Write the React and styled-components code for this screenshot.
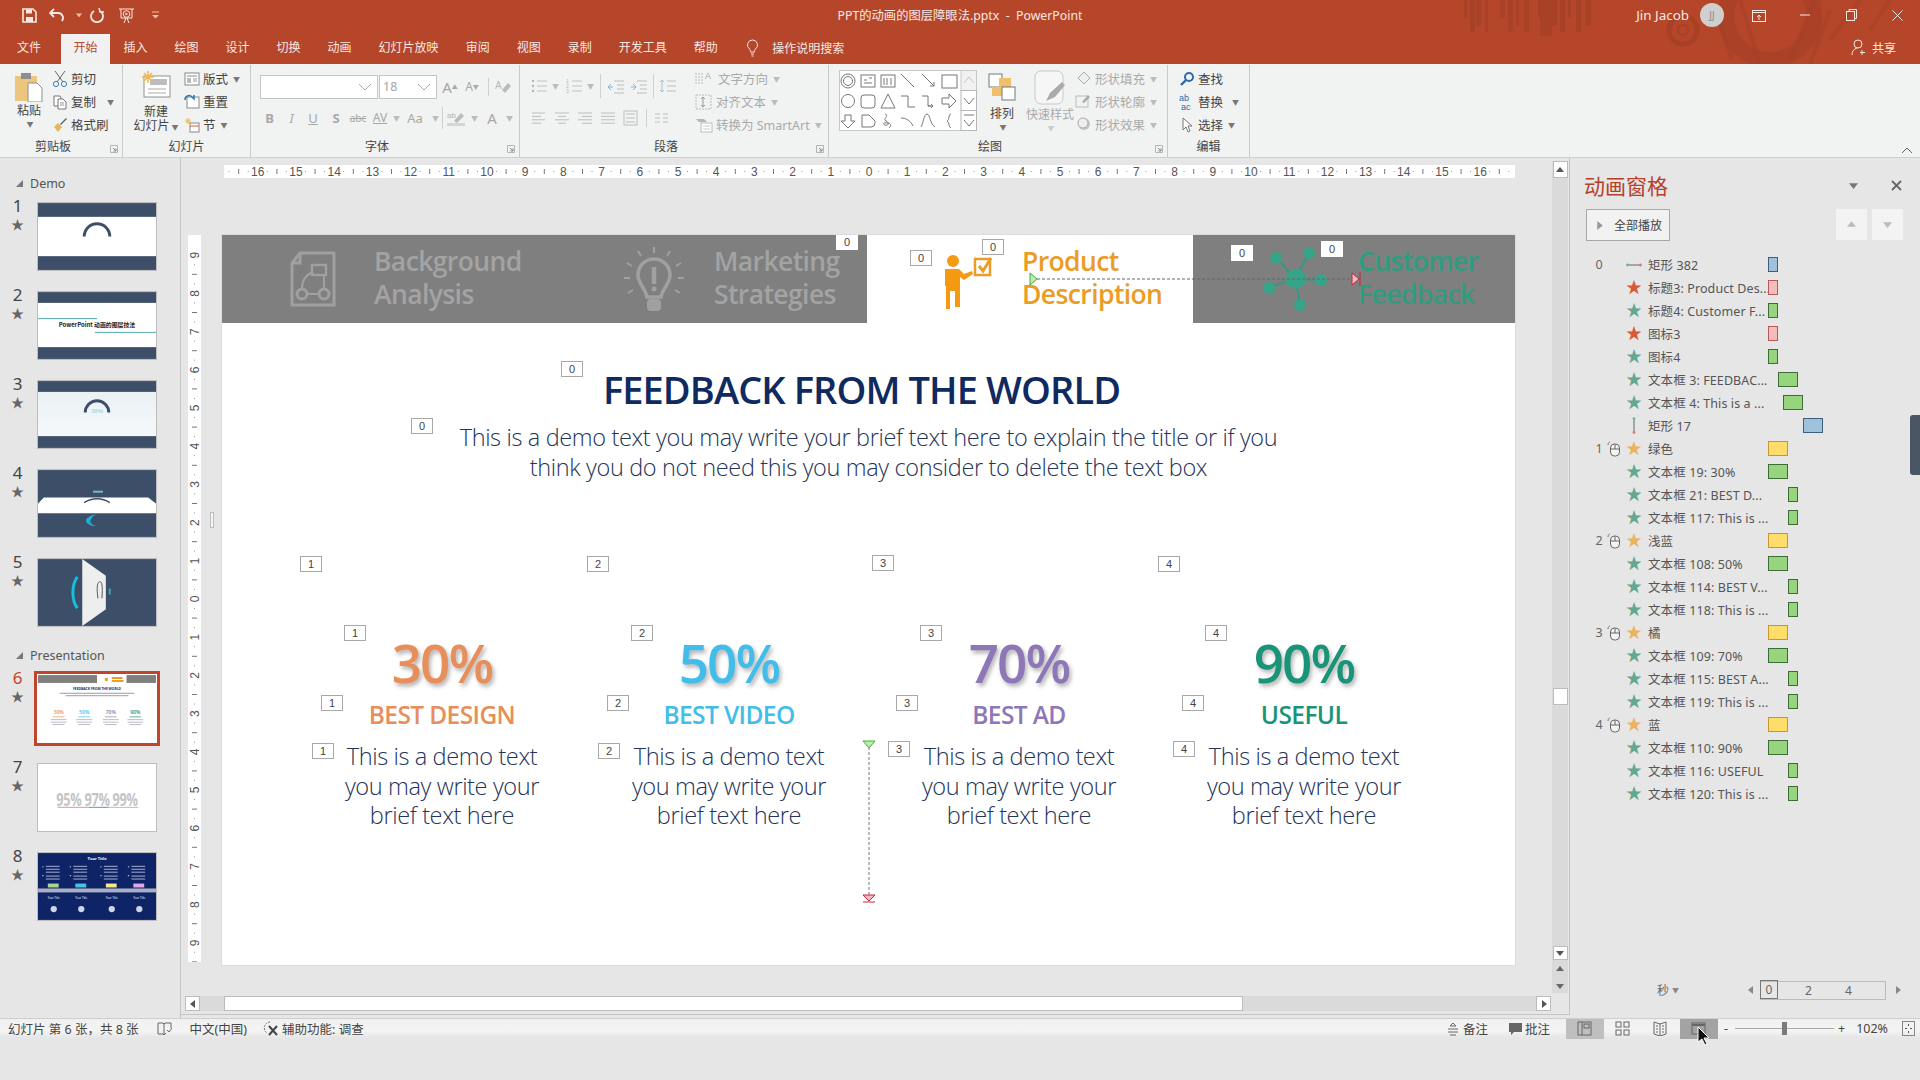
import React from 'react';
import styled, { createGlobalStyle } from 'styled-components';

const UI = `"Noto Sans", "Noto Sans CJK SC", sans-serif`;
const SLIDE = `"Open Sans", "Noto Sans", sans-serif`;

const Global = createGlobalStyle`
  html, body { margin: 0; padding: 0; width: 1920px; height: 1080px; overflow: hidden; background: #e6e6e6; }
  * { box-sizing: border-box; }
  #root { font-family: ${UI}; }
`;

const Page = styled.div`width:1920px;height:1080px;display:flex;flex-direction:column;background:#e6e6e6;color:#444;overflow:hidden;`;
const Header = styled.header`position:relative;height:64px;background:#b5462a;color:#f6e9e4;flex:none;`;
const Decor = styled.svg`position:absolute;left:1440px;top:0;width:480px;height:64px;pointer-events:none;`;
const TitleBar = styled.div`position:relative;height:30px;display:grid;grid-template-columns:1fr auto 1fr;align-items:center;`;
const Qat = styled.div`display:flex;align-items:center;padding-left:20px;height:30px;`;
const QatSlot = styled.span`display:flex;width:${p => p.$w}px;justify-content:center;`;
const DocTitle = styled.div`font-size:12.3px;white-space:pre;`;
const WinControls = styled.div`display:flex;align-items:center;justify-content:flex-end;height:30px;`;
const UserName = styled.span`font-size:13.4px;margin-right:11px;`;
const Avatar = styled.span`width:24px;height:24px;border-radius:50%;background:#cfcfcf;color:#8b8b8b;font-size:10px;display:flex;align-items:center;justify-content:center;margin-right:12px;`;
const WinBtn = styled.span`width:46px;display:flex;justify-content:center;`;
const TabRow = styled.nav`position:relative;height:34px;display:flex;align-items:flex-end;padding-left:3.5px;`;
const Tab = styled.div`height:30px;padding:0 ${p => p.$active ? 12.5 : 13.5}px;margin-right:${p => p.$mr || 0}px;font-size:12px;line-height:27px;white-space:nowrap;
  background:${p => p.$active ? '#f1f1f1' : 'transparent'};color:${p => p.$active ? '#b5462a' : '#f6e9e4'};`;
const TellMe = styled.div`display:flex;align-items:center;gap:13px;height:30px;padding-bottom:3px;font-size:12px;margin-left:15px;`;
const Share = styled.div`display:flex;align-items:center;gap:5px;height:30px;padding-bottom:3px;font-size:12px;margin-left:auto;margin-right:24px;`;

const Ribbon = styled.section`height:94px;background:#f1f2f2;border-bottom:1px solid #cfcfcf;display:flex;flex:none;position:relative;`;
const Group = styled.div`position:relative;width:${p => p.$w}px;height:92px;margin-top:1px;display:flex;flex-direction:column;
  border-right:1px solid #c9c9c9;`;
const GroupBody = styled.div`flex:1;display:flex;padding:1px 0 0 ${p => p.$pl || 0}px;gap:${p => p.$gap || 0}px;min-height:0;`;
const GroupLabel = styled.div`height:20px;font-size:12px;line-height:20px;text-align:center;padding-right:${p => p.$launch ? 16 : 0}px;color:#444;`;
const Launcher = styled.svg`position:absolute;right:4px;bottom:4px;width:8px;height:8px;`;
const Big = styled.div`display:flex;flex-direction:column;align-items:center;width:${p => p.$w}px;margin-left:${p => p.$ml || 0}px;font-size:12px;line-height:14px;color:${p => p.$off ? '#aaa' : '#444'};text-align:center;padding-top:${p => p.$pt ?? 5}px;white-space:nowrap;`;
const Stack = styled.div`display:flex;flex-direction:column;padding-top:1px;margin-left:${p => p.$ml || 0}px;`;
const Small = styled.div`height:23px;display:flex;align-items:center;gap:3px;font-size:12.5px;white-space:nowrap;color:${p => p.$off ? '#aaa' : '#444'};`;
const Caret = styled.span`font-size:7px;color:${p => p.$c || '#777'};margin-left:${p => p.$ml || 2}px;`;
const Rows = styled.div`display:flex;flex-direction:column;width:${p => p.$w ? p.$w + 'px' : 'auto'};gap:${p => p.$gap || 8}px;padding-top:${p => p.$pt || 9}px;`;
const RowLine = styled.div`display:flex;align-items:center;gap:${p => p.$gap || 0}px;height:${p => p.$h || 23}px;`;
const Combo = styled.div`width:${p => p.$w}px;height:24px;background:#fff;border:1px solid #c5c5c5;margin-left:${p => p.$ml || 0}px;display:flex;align-items:center;justify-content:space-between;padding:0 5px 0 3px;font-size:12.5px;color:#a5a5a5;`;
const Fmt = styled.span`display:flex;justify-content:center;align-items:center;flex:none;width:${p => p.$w}px;margin-left:${p => p.$ml || 0}px;font-size:${p => p.$s || 13}px;color:#a8a8a8;font-weight:${p => p.$b ? 700 : 400};font-style:${p => p.$i ? 'italic' : 'normal'};text-decoration:${p => p.$u ? 'underline' : p.$x ? 'line-through' : 'none'};`;
const FmtMark = styled.sup`font-size:6px;`;
const VSep = styled.span`width:1px;height:${p => p.$h || 20}px;background:#d0d0d0;margin:0 ${p => p.$m ?? 4}px;`;
const Spacer = styled.span`width:${p => p.$w}px;flex:none;`;
const GalleryWrap = styled.div`padding-top:4px;`;
const Collapse = styled.svg`position:absolute;right:7px;bottom:3px;width:12px;height:8px;`;

const Main = styled.main`height:860px;display:flex;flex:none;`;
const LeftPane = styled.aside`width:181px;border-right:1px solid #c4c4c4;padding-top:14px;flex:none;`;
const Section = styled.div`margin-top:${p => p.$mt || 0}px;`;
const SectionLabel = styled.div`height:22px;display:flex;align-items:center;gap:7px;padding-left:16px;font-size:12.5px;color:#555;`;
const Thumbs = styled.div`display:flex;flex-direction:column;gap:20px;padding-top:8px;`;
const ThumbRow = styled.div`display:flex;`;
const ThumbMeta = styled.div`width:37px;display:flex;flex-direction:column;align-items:center;padding-right:2px;font-size:17px;line-height:22px;margin-top:-7px;color:${p => p.$active ? '#c0452c' : '#444'};`;
const MetaStar = styled.span`font-size:13px;line-height:13px;color:#666;margin-top:1px;`;
const Thumb = styled.div`width:120px;height:69px;background:#fff;border:1px solid ${p => p.$active ? '#fff' : '#bdbdbd'};box-shadow:${p => p.$active ? '0 0 0 3px #c0452c' : 'none'};overflow:hidden;svg{display:block;width:100%;height:100%;}`;

const Center = styled.div`width:1389px;height:857px;display:flex;flex-direction:column;border-right:1px solid #c4c4c4;border-bottom:1px solid #c4c4c4;flex:none;`;
const CenterTop = styled.div`flex:1;display:flex;min-height:0;`;
const Work = styled.div`flex:1;display:flex;flex-direction:column;min-width:0;position:relative;`;
const HRuler = styled.svg`display:block;width:1291px;height:13px;margin:7px 0 0 43px;background:#fff;flex:none;`;
const Canvas = styled.div`flex:1;display:flex;align-items:flex-start;padding:57px 0 0 7px;`;
const VRuler = styled.svg`display:block;width:13px;height:727px;background:#fff;flex:none;`;
const Sash = styled.span`position:absolute;left:29px;top:354px;width:4px;height:16px;background:#f5f5f5;border:1px solid #bbb;`;
const Slide = styled.article`position:relative;margin-left:21px;width:1293px;height:730px;background:#fff;overflow:hidden;flex:none;box-shadow:0 0 0 1px #dcdcdc;`;
const Bar = styled.div`display:flex;height:88px;`;
const BarSeg = styled.div`display:flex;width:${p => p.$w}px;background:${p => p.$bg};`;
const BarItem = styled.div`display:flex;align-items:center;flex:none;width:${p => p.$w}px;padding-left:${p => p.$pl}px;gap:${p => p.$gap}px;`;
const BarLabel = styled.div`font-family:${SLIDE};font-weight:600;font-size:26.5px;line-height:33px;letter-spacing:-.6px;margin-top:-2px;color:${p => p.$c};white-space:nowrap;`;
const SlideTitle = styled.h1`margin:41px 14px 0 0;text-align:center;font-family:${SLIDE};font-weight:600;font-size:38px;line-height:50px;letter-spacing:-.9px;color:#0f2a5f;`;
const SlideLead = styled.p`margin:9px 0 0;text-align:center;font-family:${SLIDE};font-weight:300;font-size:23.5px;line-height:29.5px;letter-spacing:-.35px;color:#24345a;`;
const Cols = styled.div`display:grid;grid-template-columns:287px 287px 293px 277px;margin:149px 0 0 76.5px;`;
const Col = styled.div`display:flex;flex-direction:column;align-items:center;text-align:center;`;
const Pct = styled.div`font-family:${SLIDE};font-weight:600;font-size:53px;line-height:64px;letter-spacing:-2px;color:${p => p.$c};text-shadow:2px 3px 4px rgba(0,0,0,.3);`;
const ColHead = styled.div`margin-top:3px;font-family:${SLIDE};font-weight:600;font-size:24.5px;line-height:34px;letter-spacing:-.6px;color:${p => p.$c};`;
const ColText = styled.p`margin:10px 0 0;font-family:${SLIDE};font-weight:300;font-size:23.6px;line-height:29.5px;letter-spacing:-.4px;color:#24345a;`;
const Tag = styled.span`position:absolute;left:${p => p.$x}px;top:${p => p.$y}px;width:22px;height:16px;display:flex;align-items:center;justify-content:center;background:#fff;border:1px solid ${p => p.$bare ? '#fff' : '#a8a8a8'};font-size:11px;line-height:14px;color:#444;font-family:"Liberation Sans",sans-serif;`;
const SlideOverlay = styled.svg`position:absolute;left:0;top:0;width:1293px;height:730px;pointer-events:none;`;
const VScroll = styled.div`width:16px;margin:3px 1px 3px 0;display:flex;flex-direction:column;align-items:center;background:#dadada;flex:none;`;
const VThumb = styled.div`width:15px;height:17px;background:#fff;border:1px solid #bbb;margin-top:${p => p.$mt}px;flex:none;`;
const ScrollBtn = styled.div`width:15px;height:${p => p.$h || 15}px;background:${p => p.$flat ? 'transparent' : '#fff'};border:1px solid ${p => p.$flat ? 'transparent' : '#bbb'};display:flex;align-items:center;justify-content:center;margin-top:${p => p.$mt || 0}px;flex:none;`;
const HScroll = styled.div`height:15px;margin:0 18px 3px 4px;display:flex;align-items:stretch;background:#dadada;flex:none;`;
const HThumb = styled.div`width:1019px;background:#fff;border:1px solid #bbb;margin-left:24px;`;
const HEnd = styled.div`margin-left:auto;display:flex;`;

const AnimPane = styled.aside`flex:1;display:flex;flex-direction:column;padding:0 0 18px 14px;position:relative;`;
const PaneHead = styled.div`display:flex;align-items:center;height:51px;padding-top:3px;font-size:21px;color:#b5402a;`;
const PaneIcons = styled.div`margin-left:auto;display:flex;align-items:center;gap:33px;padding-right:18px;`;
const PaneTools = styled.div`display:flex;align-items:flex-start;padding-left:2px;height:44px;`;
const PlayAll = styled.div`width:84px;height:32px;background:#f2f2f2;border:1px solid #a8a8a8;display:flex;align-items:center;padding-left:8px;gap:10px;font-size:12px;color:#444;`;
const Order = styled.div`margin-left:auto;margin-right:17px;display:flex;gap:5px;`;
const OrderBtn = styled.div`width:31px;height:31px;background:#f3f3f3;display:flex;align-items:center;justify-content:center;`;
const AnimList = styled.div`display:flex;flex-direction:column;`;
const AnimRow = styled.div`height:23px;display:grid;grid-template-columns:16px 14px 26px 121px 1fr;align-items:center;padding-left:7px;font-size:12.5px;color:#555;`;
const AnimNum = styled.span`text-align:center;color:#666;font-size:12.5px;`;
const AnimIcon = styled.span`display:flex;justify-content:center;align-items:center;font-size:16px;line-height:15px;color:${p => p.$c || '#666'};`;
const AnimText = styled.span`padding-left:1px;white-space:nowrap;letter-spacing:.1px;`;
const AnimBar = styled.span`display:block;height:15px;width:${p => p.$w}px;margin-left:${p => p.$at}px;background:${p => p.$bg};border:1px solid ${p => p.$bd};`;
const Timeline = styled.div`margin-top:auto;display:flex;align-items:center;height:20px;padding-left:73px;font-size:12px;color:#666;`;
const TimeBox = styled.div`width:126px;height:19px;display:flex;align-items:center;border:1px solid #bbb;margin:0 8px 0 5px;position:relative;`;
const TimeZero = styled.span`width:18px;height:19px;margin:-1px 0 0 -1px;border:1px solid #777;display:flex;align-items:center;justify-content:center;`;
const TimeMark = styled.span`margin-left:${p => p.$ml}px;`;
const Overscroll = styled.span`position:absolute;right:0;top:257px;width:10px;height:60px;background:#4a5663;border-radius:3px 0 0 3px;`;

const Status = styled.footer`height:20px;flex:none;border-top:1px solid #cfcfcf;background:linear-gradient(#f0f0f0,#f4f4f4 60%,#e6e6e6);display:flex;align-items:center;font-size:12.5px;color:#444;position:relative;`;
const StatusText = styled.span`margin-left:${p => p.$ml || 0}px;margin-right:${p => p.$mr || 0}px;white-space:pre;display:flex;align-items:center;gap:${p => p.$gap || 0}px;`;
const StatusPush = styled(StatusText)`margin-left:auto;`;
const ViewBtn = styled.span`width:38px;height:20px;display:flex;align-items:center;justify-content:center;background:${p => p.$bg || 'transparent'};margin-left:${p => p.$ml || 0}px;`;
const Zoom = styled.div`width:99px;height:1px;background:#aaa;position:relative;margin:0 4px 0 7px;`;
const ZoomKnob = styled.span`position:absolute;left:47px;top:-6px;width:5px;height:13px;background:#7a7a7a;`;
const Pointer = styled.svg`position:absolute;left:1697px;top:7px;width:14px;height:20px;`;

const Ic = ({ w = 16, h = 16, vb, children, ...r }) => (
  <svg width={w} height={h} viewBox={vb || `0 0 ${w} ${h}`} fill="none" {...r}>{children}</svg>
);

const Decoration = () => (
  <Decor viewBox="0 0 480 64">
    <g fill="#a13e25" opacity=".6">
      {[24, 30, 36, 45, 60, 68, 76, 84, 98, 104, 112, 120, 128, 136, 146].map((x, i) => (
        <rect key={x} x={x} y="0" width={i % 3 === 0 ? 3 : 5} height={i % 2 ? 32 : 18 + (i % 4) * 4} />
      ))}
      <rect x="100" y="0" width="12" height="36" />
    </g>
    <g fill="none" stroke="#a13e25">
      <circle cx="243" cy="30" r="14" strokeWidth="5" opacity=".7" />
      <circle cx="243" cy="30" r="5" strokeWidth="2" opacity=".7" />
      <circle cx="330" cy="16" r="44" strokeWidth="16" opacity=".5" />
      <path d="M272 0l20 60M300 0l20 64M375 0l-25 60M390 10l-20 54M420 0l-30 40M450 0l-20 30" strokeWidth="4" opacity=".4" />
    </g>
  </Decor>
);

const Launch = () => (
  <Launcher viewBox="0 0 8 8"><path d="M.5 7.5v-7h7v7z" stroke="#b5b5b5" fill="none" /><path d="M3 3l3 3M6 3.5V6H3.5" stroke="#888" fill="none" /></Launcher>
);

const Bullets = ({ n }) => (
  <Ic w={18} h={15}>
    {[2, 7, 12].map(y => (<g key={y}>
      {n ? <text x="0" y={y + 2} fontSize="5" fill="#b5b5b5" fontFamily="Liberation Sans">{(y + 3) / 5}</text> : <circle cx="2" cy={y} r="1.2" fill="#b5b5b5" />}
      <path d={`M6 ${y}h10`} stroke="#c2c2c2" />
    </g>))}
  </Ic>
);
const AlignIc = ({ mode }) => {
  const l = mode === 0 ? [[1, 14], [1, 10], [1, 14], [1, 10]] : mode === 1 ? [[1, 15], [4, 12], [1, 15], [4, 12]] : mode === 2 ? [[1, 15], [5, 15], [1, 15], [5, 15]] : [[1, 15], [1, 15], [1, 15], [1, 15]];
  return <Ic w={16} h={14}>{l.map(([a, b], i) => <path key={i} d={`M${a} ${2 + i * 3.4}H${b}`} stroke="#bdbdbd" />)}</Ic>;
};

const Gallery = () => (
  <Ic w={138} h={61}>
    <rect x=".5" y=".5" width="137" height="60" fill="#fff" stroke="#c8c8c8" />
    <rect x="122" y=".5" width="15.5" height="20" fill="#f1f1f1" stroke="#c8c8c8" />
    <rect x="122" y="20.5" width="15.5" height="20" fill="#fff" stroke="#b5b5b5" />
    <rect x="122" y="40.5" width="15.5" height="20" fill="#fff" stroke="#b5b5b5" />
    <path d="M125 13l5-6 5 6" stroke="#c5c5c5" /><path d="M125 28l5 6 5-6" stroke="#777" /><path d="M125 45h10M125 50l5 6 5-6" stroke="#777" />
    <g stroke="#777" fill="none">
      <circle cx="9" cy="11" r="7" /><circle cx="9" cy="11" r="4.5" />
      <rect x="22" y="5" width="14" height="12" /><path d="M25 10h3M25 13h8M30 8h3" />
      <rect x="42" y="5" width="14" height="12" /><path d="M45 8v7M48 8v7M52 8v7" />
      <path d="M62 4l13 13M83 4l12 12M95 16v-4M95 16h-4" />
      <rect x="103" y="5" width="15" height="13" />
      <circle cx="9" cy="31" r="6.5" />
      <rect x="22" y="25" width="14" height="13" rx="3" />
      <path d="M49 24l7 14H42z" />
      <path d="M62 26h7v11h7M83 26h6v10h3M89 36h5l-2-2M92 38l2-2" />
      <path d="M103 28h7v-4l7 7-7 7v-4h-7z" />
      <path d="M6 45v6H2l7 7 7-7h-4v-6z" />
      <path d="M23 57V45h7l6 6v2a4 4 0 01-4 4z" />
      <path d="M46 44c5 2-3 5 1 7s2 5-1 4-1-3 3-2 3 3 1 5" />
      <path d="M62 48c5 0 10 3 12 8M82 57c2-3 3-13 6-13s3 10 8 13" />
      <path d="M112 44c-3 0-1 6-4 7 3 1 1 6 4 7" />
    </g>
  </Ic>
);

const RibbonBar = () => (
  <Ribbon>
    <Group $w={123}>
      <GroupBody $pl={13}>
        <Big $w={32}>
          <Ic w={30} h={31} style={{ marginBottom: 2 }}>
            <rect x="1" y="5" width="22" height="25" fill="#edc67d" />
            <rect x="7" y="2" width="10" height="6" fill="#8f8f8f" />
            <path d="M14 12h9l5 5v14H14z" fill="#fff" stroke="#8f8f8f" />
          </Ic>
          粘贴
          <Caret>▼</Caret>
        </Big>
        <Stack $ml={7}>
          <Small><Ic w={16} h={18}><path d="M3 1l8 11M13 1L5 12" stroke="#666" /><circle cx="4" cy="14" r="2.6" stroke="#3d7fb8" /><circle cx="12" cy="14" r="2.6" stroke="#3d7fb8" /></Ic>剪切</Small>
          <Small><Ic w={16} h={16}><path d="M2 2h6l1 2v8H2z" stroke="#777" fill="#fff" /><path d="M6 5h5l3 3v7H6z" stroke="#777" fill="#fff" /><path d="M8 9h4M8 11h4" stroke="#999" /></Ic>复制<Caret $ml={8}>▼</Caret></Small>
          <Small><Ic w={16} h={16}><path d="M8 7l6-6 1 1-6 6z" fill="#666" /><path d="M2 10l4-4 4 4-4 5z" fill="#e5b55d" /></Ic>格式刷</Small>
        </Stack>
      </GroupBody>
      <GroupLabel $launch>剪贴板</GroupLabel>
      <Launch />
    </Group>
    <Group $w={128}>
      <GroupBody $pl={10}>
        <Big $w={46} $pt={4}>
          <Ic w={30} h={29} style={{ marginBottom: 6 }}>
            <rect x="3" y="6" width="26" height="21" fill="#fff" stroke="#8f8f8f" />
            <rect x="9" y="9" width="17" height="6" fill="#bdbdbd" /><path d="M7 19h18M7 23h18" stroke="#aaa" />
            <path d="M7 1v12M1 7h12M3 3l8 8M11 3l-8 8" stroke="#f1b94f" strokeWidth="1.5" />
          </Ic>
          新建
          <span>幻灯片<Caret>▼</Caret></span>
        </Big>
        <Stack $ml={5}>
          <Small><Ic w={16} h={16}><rect x="1" y="2" width="14" height="12" fill="#fff" stroke="#888" /><path d="M3 5h10" stroke="#888" /><rect x="3" y="7" width="4" height="5" fill="#bbb" /><path d="M9 8h4M9 10h4" stroke="#999" /></Ic>版式<Caret>▼</Caret></Small>
          <Small><Ic w={16} h={16}><rect x="3" y="3" width="12" height="11" fill="#fff" stroke="#888" /><path d="M1 6a4 4 0 017-3l2 2V1" stroke="#2b7ab9" strokeWidth="1.5" /></Ic>重置</Small>
          <Small><Ic w={16} h={16}><path d="M4 1v6M1 4h6M2 2l4 4M6 2L2 6" stroke="#f1b94f" /><rect x="6" y="6" width="9" height="9" fill="#fff" stroke="#888" /><path d="M6 9h9" stroke="#d2603b" /></Ic>节<Caret>▼</Caret></Small>
        </Stack>
      </GroupBody>
      <GroupLabel>幻灯片</GroupLabel>
    </Group>
    <Group $w={269}>
      <GroupBody $pl={9}>
        <Rows $pt={9} $gap={8}>
          <RowLine>
            <Combo $w={118}><span />
              <Ic w={14} h={8}><path d="M1 1l6 6 6-6" stroke="#aaa" /></Ic></Combo>
            <Combo $w={58} $ml={1}>18<Ic w={14} h={8}><path d="M1 1l6 6 6-6" stroke="#aaa" /></Ic></Combo>
            <Fmt $w={22} $s={15} $ml={2}>A<FmtMark>▲</FmtMark></Fmt>
            <Fmt $w={22} $s={12}>A<FmtMark>▼</FmtMark></Fmt>
            <VSep $h={18} $m={5} />
            <Ic w={18} h={17}><text x="1" y="11" fontSize="10" fill="#b5b5b5" fontFamily="Liberation Sans">A</text><path d="M8 12l6-7 3 3-6 7z" fill="#bbb" /></Ic>
          </RowLine>
          <RowLine>
            <Fmt $w={23} $b $ml={-2}>B</Fmt>
            <Fmt $w={21} $i>I</Fmt>
            <Fmt $w={22} $u>U</Fmt>
            <Fmt $w={24} $b>S</Fmt>
            <Fmt $w={20} $s={10} $x>abc</Fmt>
            <Fmt $w={24} $s={12} $u>AV</Fmt><Caret $c="#bbb" $ml={1}>▼</Caret>
            <Fmt $w={30}>Aa</Fmt><Caret $c="#bbb">▼</Caret>
            <VSep $h={22} $m={3} />
            <Ic w={22} h={18}><text x="1" y="9" fontSize="8" fill="#b5b5b5" fontFamily="Liberation Sans">ab</text><path d="M8 12l7-8 3 3-7 7z" fill="#bbb" /><rect x="1" y="14" width="18" height="3" fill="#d5d5d5" /></Ic>
            <Caret $c="#bbb" $ml={3}>▼</Caret>
            <Fmt $w={22} $s={15} $ml={3}>A</Fmt><Caret $c="#bbb" $ml={3}>▼</Caret>
          </RowLine>
        </Rows>
      </GroupBody>
      <GroupLabel $launch>字体</GroupLabel>
      <Launch />
    </Group>
    <Group $w={309}>
      <GroupBody $pl={11}>
        <Rows $pt={7} $gap={8} $w={164}>
          <RowLine $h={26}>
            <Bullets /><Caret $c="#bbb" $ml={3}>▼</Caret>
            <Spacer $w={7} /><Bullets n /><Caret $c="#bbb" $ml={3}>▼</Caret>
            <VSep $h={24} $m={6} />
            <Ic w={18} h={15}><path d="M7 2h10M10 6h7M10 10h7M7 14h10" stroke="#bdbdbd" /><path d="M6 8H1l3-3M1 8l3 3" stroke="#8ab0d0" /></Ic>
            <Spacer $w={5} />
            <Ic w={18} h={15}><path d="M7 2h10M10 6h7M10 10h7M7 14h10" stroke="#bdbdbd" /><path d="M1 8h5L3 5M6 8l-3 3" stroke="#8ab0d0" /></Ic>
            <VSep $h={24} $m={5} />
            <Ic w={18} h={17}><path d="M3 2v12M1 4l2-2 2 2M1 12l2 2 2-2" stroke="#a9bfd3" /><path d="M8 3h9M8 8h9M8 13h9" stroke="#bdbdbd" /></Ic>
          </RowLine>
          <RowLine $gap={7} $h={22}>
            <AlignIc mode={0} /><AlignIc mode={1} /><AlignIc mode={2} /><AlignIc mode={3} />
            <Ic w={16} h={16}><rect x="1" y="1" width="13" height="14" stroke="#bdbdbd" /><path d="M3 4h9M3 8h9M3 12h9" stroke="#bdbdbd" /></Ic>
            <VSep $h={18} $m={0} />
            <Ic w={16} h={14}><path d="M1 3h5M1 7h5M1 11h5M9 3h5M9 7h5M9 11h5" stroke="#bdbdbd" /></Ic>
          </RowLine>
        </Rows>
        <Stack>
          <Small $off><Ic w={20} h={17}><path d="M1 3v11M4 3v11M7 3v11" stroke="#bbb" strokeDasharray="2 1" /><text x="10" y="9" fontSize="9" fill="#aaa" fontFamily="Liberation Sans">A</text></Ic>文字方向<Caret $c="#bbb">▼</Caret></Small>
          <Small $off><Ic w={18} h={17}><rect x="1" y="2" width="15" height="14" stroke="#bbb" strokeDasharray="2 1" /><path d="M8 5v8M6 6l2-2 2 2M6 12l2 2 2-2" stroke="#999" /></Ic>对齐文本<Caret $c="#bbb">▼</Caret></Small>
          <Small $off><Ic w={18} h={17}><path d="M1 3h8l3 3H4z" fill="#a5c2a8" /><rect x="6" y="7" width="11" height="9" fill="#fff" stroke="#bbb" /><path d="M8 10h7M8 13h7" stroke="#ccc" /></Ic>转换为 SmartArt<Caret $c="#bbb">▼</Caret></Small>
        </Stack>
      </GroupBody>
      <GroupLabel $launch>段落</GroupLabel>
      <Launch />
    </Group>
    <Group $w={339}>
      <GroupBody $pl={10}>
        <GalleryWrap><Gallery /></GalleryWrap>
        <Big $w={46} $pt={6} $ml={2}>
          <Ic w={30} h={32} style={{ marginBottom: 3 }}>
            <rect x="2" y="2" width="13" height="13" fill="#fff" stroke="#777" />
            <rect x="12" y="6" width="12" height="12" fill="#efbf6b" />
            <rect x="5" y="15" width="10" height="9" fill="#efbf6b" />
            <rect x="15" y="15" width="13" height="13" fill="#fff" stroke="#777" />
          </Ic>
          排列
          <Caret>▼</Caret>
        </Big>
        <Big $w={52} $off $pt={4} $ml={-1}>
          <Ic w={32} h={35} style={{ marginBottom: 3 }}>
            <rect x="1" y="1" width="28" height="33" rx="6" stroke="#c8c8c8" fill="#f6f6f6" />
            <path d="M12 31l4-8 12-11 3 3-10 12z" fill="#aaa" />
          </Ic>
          快速样式
          <Caret $c="#ccc">▼</Caret>
        </Big>
        <Stack $ml={-1}>
          <Small $off><Ic w={17} h={17}><path d="M3 8l6-6 6 6-6 6z" stroke="#aaa" fill="#eee" /></Ic>形状填充<Caret $c="#bbb">▼</Caret></Small>
          <Small $off><Ic w={17} h={17}><rect x="1" y="3" width="12" height="11" stroke="#bbb" /><path d="M7 9l6-7 2 2-6 6z" fill="#aaa" /></Ic>形状轮廓<Caret $c="#bbb">▼</Caret></Small>
          <Small $off><Ic w={17} h={17}><circle cx="9" cy="8" r="6" fill="#c5c5c5" /><circle cx="8" cy="7" r="5" fill="#eee" stroke="#aaa" /></Ic>形状效果<Caret $c="#bbb">▼</Caret></Small>
        </Stack>
      </GroupBody>
      <GroupLabel $launch>绘图</GroupLabel>
      <Launch />
    </Group>
    <Group $w={82}>
      <GroupBody $pl={11}>
        <Stack>
          <Small><Ic w={16} h={16}><circle cx="10" cy="6" r="4" stroke="#2d6aa8" strokeWidth="2" /><path d="M7 9l-5 5" stroke="#2d6aa8" strokeWidth="2.4" /></Ic>查找</Small>
          <Small><Ic w={16} h={18}><text x="0" y="8" fontSize="9" fill="#2d6aa8" fontFamily="Liberation Sans">ab</text><text x="2" y="17" fontSize="9" fill="#2d6aa8" fontFamily="Liberation Sans">ac</text></Ic>替换<Caret $ml={6}>▼</Caret></Small>
          <Small><Ic w={16} h={18}><path d="M4 2v12l3-3 2 5 2-1-2-5h4z" stroke="#777" fill="#fff" /></Ic>选择<Caret>▼</Caret></Small>
        </Stack>
      </GroupBody>
      <GroupLabel>编辑</GroupLabel>
    </Group>
    <Collapse viewBox="0 0 12 8"><path d="M1 7l5-5 5 5" stroke="#666" fill="none" /></Collapse>
  </Ribbon>
);

const range = (a, b) => Array.from({ length: b - a + 1 }, (_, i) => a + i);

const HRulerArt = () => (
  <HRuler viewBox="0 0 1291 13">
    {range(-17, 17).map(n => {
      const x = 645 + n * 38.2;
      return (
        <g key={n}>
          {Math.abs(n) <= 16 && <text x={x} y="11" textAnchor="middle" fontSize="12" fill="#555" fontFamily="Liberation Sans">{Math.abs(n)}</text>}
          <path d={`M${x + 19.1} 4v5`} stroke="#777" />
          <path d={`M${x + 9.5} 6v1M${x + 28.6} 6v1`} stroke="#999" />
        </g>
      );
    })}
  </HRuler>
);
const VRulerArt = () => (
  <VRuler viewBox="0 0 13 727">
    {range(-9, 9).map(n => {
      const y = 364 + n * 38.2;
      return (
        <g key={n}>
          <text x="0" y="0" transform={`translate(11 ${y}) rotate(-90)`} textAnchor="middle" fontSize="12" fill="#555" fontFamily="Liberation Sans">{Math.abs(n)}</text>
          <path d={`M4 ${y + 19.1}h5`} stroke="#777" />
          <path d={`M6 ${y + 9.5}h1M6 ${y + 28.6}h1`} stroke="#999" />
        </g>
      );
    })}
  </VRuler>
);

const NAVY = '#3d4f68';
const Arc = ({ cy = 34, r = 13, c = NAVY, w = 3 }) => <path d={`M${60 - r} ${cy}a${r} ${r} 0 01${r * 2} 0`} stroke={c} strokeWidth={w} fill="none" />;
const ThumbArt = ({ n }) => {
  if (n === 1) return <svg viewBox="0 0 120 68"><rect width="120" height="68" fill="#fff" /><rect width="120" height="14" fill={NAVY} /><rect y="54" width="120" height="14" fill={NAVY} /><Arc /></svg>;
  if (n === 2) return <svg viewBox="0 0 120 68"><rect width="120" height="68" fill="#fff" /><rect width="120" height="11" fill={NAVY} /><rect y="56" width="120" height="12" fill={NAVY} /><path d="M0 27h60M58 41h62" stroke="#4fa7ad" /><text x="60" y="36" textAnchor="middle" fontSize="6" fontWeight="700" fill="#222" fontFamily="Noto Sans CJK SC">PowerPoint 动画的图层技法</text></svg>;
  if (n === 3) return <svg viewBox="0 0 120 68"><defs><linearGradient id="t3" x1="0" y1="0" x2="0" y2="1"><stop offset="0" stopColor="#e7f0f4" /><stop offset="1" stopColor="#f8fafb" /></linearGradient></defs><rect width="120" height="68" fill="url(#t3)" /><rect width="120" height="11" fill={NAVY} /><rect y="56" width="120" height="12" fill={NAVY} /><Arc cy={32} r={12} /><text x="60" y="32" textAnchor="middle" fontSize="6" fill="#9fe0ea" fontWeight="700" fontFamily="Open Sans">30%</text></svg>;
  if (n === 4) return <svg viewBox="0 0 120 68"><rect width="120" height="68" fill={NAVY} /><path d="M0 34l6-6h106l8 6v10H0z" fill="#fff" /><path d="M47 33c8-5 18-5 26 0" stroke={NAVY} strokeWidth="1.5" fill="none" /><path d="M56 22h10" stroke="#6fc0c8" strokeWidth="2" /><path d="M59 45c-9 2-12 6-9 9 2 2 6 3 9 3-5-2-7-4-5-7 1-2 3-4 5-5z" fill="#1ab0d8" /></svg>;
  if (n === 5) return <svg viewBox="0 0 120 68"><rect width="120" height="68" fill={NAVY} /><path d="M45 0l24 17v34L45 68z" fill="#eee" /><path d="M40 18c-6 8-6 24 0 32" stroke="#14c0dc" strokeWidth="3" fill="none" /><path d="M61 40c-2-14 0-17 2-17s3 4 2 17" stroke="#555" fill="none" /><path d="M73 30v6" stroke="#3aa9b5" strokeWidth="2" /></svg>;
  if (n === 6) return (
    <svg viewBox="0 0 120 68">
      <rect width="120" height="68" fill="#fff" />
      <rect width="60" height="8" fill="#7f7f7f" /><rect x="90" width="30" height="8" fill="#7f7f7f" />
      <rect x="68" y="3" width="3" height="3" fill="#eb9c25" /><rect x="75" y="2" width="11" height="2" fill="#eb9c25" /><rect x="75" y="5" width="12" height="2" fill="#eb9c25" />
      <text x="60" y="15.5" textAnchor="middle" fontSize="3.4" fontWeight="700" fill="#0f2a5f" fontFamily="Open Sans">FEEDBACK FROM THE WORLD</text>
      <rect x="22" y="18" width="76" height="1" fill="#99a" /><rect x="28" y="20.5" width="64" height="1" fill="#99a" />
      {[[21, '30%', '#e78e5b'], [47, '50%', '#42bdea'], [74, '70%', '#8d77b6'], [99, '90%', '#1a9478']].map(([x, t, c]) => (
        <g key={t}>
          <text x={x} y="40" textAnchor="middle" fontSize="5.2" fontWeight="600" fill={c} fontFamily="Open Sans">{t}</text>
          <rect x={x - 6} y="42" width="12" height="1" fill={c} opacity=".7" />
          <rect x={x - 8} y="45" width="16" height=".8" fill="#aab" /><rect x={x - 8} y="47.5" width="16" height=".8" fill="#aab" /><rect x={x - 6} y="50" width="12" height=".8" fill="#aab" />
        </g>
      ))}
    </svg>
  );
  if (n === 7) return <svg viewBox="0 0 120 68"><rect width="120" height="68" fill="#fff" /><text transform="translate(60 43) scale(.72 1)" textAnchor="middle" fontSize="18" fontWeight="700" fill="#c5c5c5" letterSpacing="-.4" fontFamily="Open Sans">95% 97% 99%</text><path d="M20 44h32" stroke="#d79a8f" /><path d="M52 44h20" stroke="#5a9e8a" /><path d="M72 44h30" stroke="#c8b0c8" /></svg>;
  return (
    <svg viewBox="0 0 120 68">
      <rect width="120" height="68" fill="#0f2466" />
      <text x="60" y="7" textAnchor="middle" fontSize="4" fontWeight="700" fill="#fff" fontFamily="Open Sans">Your Title</text>
      {[[5, '#a8d88a'], [33, '#46c3e6'], [64, '#f5e98a'], [92, '#e6a5e8']].map(([x, c]) => (
        <g key={x} fill="#c9d2ea">
          <circle cx={x} cy="14" r=".7" /><circle cx={x} cy="23" r=".7" />
          <rect x={x + 3} y="13" width="14" height=".8" /><rect x={x + 3} y="16" width="14" height=".8" /><rect x={x + 3} y="19" width="14" height=".8" />
          <rect x={x + 3} y="23" width="14" height=".8" /><rect x={x + 3} y="26" width="14" height=".8" />
          <rect x={x + 5} y="31" width="11" height="4" fill={c} />
          <text x={x + 11} y="47" textAnchor="middle" fontSize="2.8" fill="#fff" fontFamily="Open Sans">Your Title</text>
          <circle cx={x + 11} cy="57" r="3.2" fill="#cdd5e8" />
        </g>
      ))}
      <rect y="36" width="120" height="4" fill="#aab0c4" />
    </svg>
  );
};

const ThumbItem = ({ n, active }) => (
  <ThumbRow>
    <ThumbMeta $active={active}>{n}<MetaStar>★</MetaStar></ThumbMeta>
    <Thumb $active={active}><ThumbArt n={n} /></Thumb>
  </ThumbRow>
);
const SecTri = () => <Ic w={7} h={7}><path d="M7 0v7H0z" fill="#777" /></Ic>;

const SlideList = () => (
  <LeftPane>
    <Section>
      <SectionLabel><SecTri />Demo</SectionLabel>
      <Thumbs>{[1, 2, 3, 4, 5].map(n => <ThumbItem key={n} n={n} />)}</Thumbs>
    </Section>
    <Section $mt={17}>
      <SectionLabel><SecTri />Presentation</SectionLabel>
      <Thumbs>{[6, 7, 8].map(n => <ThumbItem key={n} n={n} active={n === 6} />)}</Thumbs>
    </Section>
  </LeftPane>
);

const DocIcon = () => (
  <Ic w={52} h={60} stroke="#a0a0a0" strokeWidth="3">
    <path d="M14 4h34v52H6V14z" /><path d="M14 4v10H6" />
    <circle cx="16" cy="45" r="5" /><circle cx="38" cy="45" r="5" /><path d="M21 45h12M38 40V26M16 40c0-8 3-14 11-17" strokeWidth="2" />
    <rect x="26" y="16" width="14" height="10" strokeWidth="2.4" />
  </Ic>
);
const BulbIcon = () => (
  <Ic w={60} h={68}>
    <path d="M30 14c-10 0-16 8-16 16 0 9 7 12 9 22h14c2-10 9-13 9-22 0-8-6-16-16-16z" stroke="#a0a0a0" strokeWidth="3.5" />
    <path d="M30 22v17" stroke="#a0a0a0" strokeWidth="4.5" /><circle cx="30" cy="44" r="2.5" fill="#a0a0a0" />
    <rect x="23" y="54" width="14" height="12" rx="4" fill="#a0a0a0" />
    <path d="M30 2v6M14 6l3 5M46 6l-3 5M3 18l5 3M57 18l-5 3M0 33h6M54 33h6M4 48l5-3M56 48l-5-3" stroke="#a0a0a0" strokeWidth="2" />
  </Ic>
);
const PersonIcon = () => (
  <Ic w={54} h={62}>
    <circle cx="11" cy="13" r="6" fill="#f39a12" />
    <path d="M3 21h14l5 5 8-3 1 3-9 6-4-3v30h-5V43H8v18H4V38H3z" fill="#f39a12" />
    <rect x="33" y="11" width="15" height="16" stroke="#eb9c25" strokeWidth="2.5" />
    <path d="M37 18l4 5 8-13" stroke="#eb9c25" strokeWidth="3" />
  </Ic>
);
const NetIcon = () => (
  <Ic w={68} h={72}>
    <g stroke="#35997f" strokeWidth="2"><path d="M34 36L15 14M34 36L48 10M34 36l22 1M34 36L8 44M34 36l5 24" /></g>
    <g fill="#35a488">
      <circle cx="35" cy="36" r="10" /><circle cx="15" cy="15" r="6" /><circle cx="48" cy="10" r="6" />
      <circle cx="60" cy="37" r="6" /><circle cx="8" cy="45" r="6" /><circle cx="39" cy="62" r="6" />
    </g>
  </Ic>
);

const TAGS = [
  [692, 198, 0, 1], [752, 211, 0], [811, 202, 0], [1014, 207, 0, 1], [1088, 203, 0, 1], [467, 301, 0], [345, 348, 0],
  [254, 461, 1], [488, 461, 2], [721, 460, 3], [955, 461, 4],
  [290, 517, 1], [524, 517, 2], [760, 517, 3], [993, 517, 4],
  [271, 574, 1], [505, 574, 2], [741, 574, 3], [974, 574, 4],
  [264, 613, 1], [497, 613, 2], [734, 612, 3], [967, 612, 4],
];
const COLS = [
  ['30%', 'BEST DESIGN', '#e78e5b'],
  ['50%', 'BEST VIDEO', '#42bdea'],
  ['70%', 'BEST AD', '#8d77b6'],
  ['90%', 'USEFUL', '#1a9478'],
];

const SlideView = () => (
  <Slide>
    <Bar>
      <BarSeg $w={645} $bg="#7f7f7f">
        <BarItem $w={342} $pl={64} $gap={36}><DocIcon /><BarLabel $c="#a3a3a3">Background<br />Analysis</BarLabel></BarItem>
        <BarItem $w={303} $pl={60} $gap={30}><BulbIcon /><BarLabel $c="#a3a3a3">Marketing<br />Strategies</BarLabel></BarItem>
      </BarSeg>
      <BarSeg $w={326} $bg="#fff">
        <BarItem $w={326} $pl={75} $gap={26}><PersonIcon /><BarLabel $c="#eb9c25">Product<br />Description</BarLabel></BarItem>
      </BarSeg>
      <BarSeg $w={322} $bg="#7f7f7f">
        <BarItem $w={322} $pl={68} $gap={29}><NetIcon /><BarLabel $c="#2f9c80">Customer<br />Feedback</BarLabel></BarItem>
      </BarSeg>
    </Bar>
    <SlideTitle>FEEDBACK FROM THE WORLD</SlideTitle>
    <SlideLead>This is a demo text you may write your brief text here to explain the title or if you<br />think you do not need this you may consider to delete the text box</SlideLead>
    <Cols>
      {COLS.map(([p, h, c]) => (
        <Col key={p}>
          <Pct $c={c}>{p}</Pct>
          <ColHead $c={c}>{h}</ColHead>
          <ColText>This is a demo text<br />you may write your<br />brief text here</ColText>
        </Col>
      ))}
    </Cols>
    <SlideOverlay viewBox="0 0 1293 730">
      <path d="M810 44H1130" stroke="#666" strokeDasharray="3 2" />
      <path d="M808 38l7 6-7 6z" fill="#b8f0a8" stroke="#4aa63c" />
      <path d="M1130 38l7 6-7 6z" fill="#f4b8c4" stroke="#c0283c" /><path d="M1138 37v14" stroke="#c0283c" />
      <path d="M647 512V661" stroke="#777" strokeDasharray="3 2" />
      <path d="M641 506h12l-6 7z" fill="#b8f0a8" stroke="#4aa63c" />
      <path d="M641 660l6 6 6-6zM641 667h12" fill="#f4b8c4" stroke="#c0283c" />
    </SlideOverlay>
    {TAGS.map(([x, y, v, bare], i) => (
      <Tag key={i} $x={Math.round(x * 1.2245 - 222 - 11)} $y={Math.round(y * 1.2245 - 235 - 8)} $bare={bare}>{v}</Tag>
    ))}
  </Slide>
);

const Tri = ({ d, c = '#777', s = 8 }) => (
  <Ic w={s} h={s} vb="0 0 8 8"><path d={{ u: 'M0 6l4-5 4 5z', d: 'M0 2l4 5 4-5z', l: 'M6 0L1 4l5 4z', r: 'M2 0l5 4-5 4z' }[d]} fill={c} /></Ic>
);

const BARS = {
  b: ['#9fc1dc', '#3d5f7d'], p: ['#f6bcbc', '#b55a5a'], g: ['#96d47e', '#3f6b38'], y: ['#ffdd6b', '#c9952f'],
};
const RED = '#d9573a'; const TEAL = '#62a892'; const AMBER = '#e9b35f';
const ROWS = [
  { n: '0', kind: 'h', t: '矩形 382', bar: 'b', at: 0, w: 10 },
  { star: RED, t: '标题3: Product Des...', bar: 'p', at: 0, w: 10 },
  { star: TEAL, t: '标题4: Customer F...', bar: 'g', at: 0, w: 10 },
  { star: RED, t: '图标3', bar: 'p', at: 0, w: 10 },
  { star: TEAL, t: '图标4', bar: 'g', at: 0, w: 10 },
  { star: TEAL, t: '文本框 3: FEEDBAC...', bar: 'g', at: 10, w: 20 },
  { star: TEAL, t: '文本框 4: This is a ...', bar: 'g', at: 15, w: 20 },
  { kind: 'v', t: '矩形 17', bar: 'b', at: 35, w: 20 },
  { n: '1', mouse: 1, star: AMBER, t: '绿色', bar: 'y', at: 0, w: 20 },
  { star: TEAL, t: '文本框 19: 30%', bar: 'g', at: 0, w: 20 },
  { star: TEAL, t: '文本框 21: BEST D...', bar: 'g', at: 20, w: 10 },
  { star: TEAL, t: '文本框 117: This is ...', bar: 'g', at: 20, w: 10 },
  { n: '2', mouse: 1, star: AMBER, t: '浅蓝', bar: 'y', at: 0, w: 20 },
  { star: TEAL, t: '文本框 108: 50%', bar: 'g', at: 0, w: 20 },
  { star: TEAL, t: '文本框 114: BEST V...', bar: 'g', at: 20, w: 10 },
  { star: TEAL, t: '文本框 118: This is ...', bar: 'g', at: 20, w: 10 },
  { n: '3', mouse: 1, star: AMBER, t: '橘', bar: 'y', at: 0, w: 20 },
  { star: TEAL, t: '文本框 109: 70%', bar: 'g', at: 0, w: 20 },
  { star: TEAL, t: '文本框 115: BEST A...', bar: 'g', at: 20, w: 10 },
  { star: TEAL, t: '文本框 119: This is ...', bar: 'g', at: 20, w: 10 },
  { n: '4', mouse: 1, star: AMBER, t: '蓝', bar: 'y', at: 0, w: 20 },
  { star: TEAL, t: '文本框 110: 90%', bar: 'g', at: 0, w: 20 },
  { star: TEAL, t: '文本框 116: USEFUL', bar: 'g', at: 20, w: 10 },
  { star: TEAL, t: '文本框 120: This is ...', bar: 'g', at: 20, w: 10 },
];
const Mouse = () => <Ic w={14} h={17}><path d="M1 5c0-2 1-3 2-3" stroke="#777" /><rect x="3.5" y="4" width="9" height="12" rx="4" fill="#f4f4f4" stroke="#666" /><path d="M8 4v5M3.5 9h9" stroke="#666" /></Ic>;

const AnimationPane = () => (
  <AnimPane>
    <PaneHead>动画窗格
      <PaneIcons>
        <Tri d="d" s={9} />
        <Ic w={11} h={11}><path d="M1 1l9 9M10 1l-9 9" stroke="#666" strokeWidth="1.8" /></Ic>
      </PaneIcons>
    </PaneHead>
    <PaneTools>
      <PlayAll><Tri d="r" c="#999" s={9} />全部播放</PlayAll>
      <Order>
        <OrderBtn><Tri d="u" c="#bbb" s={9} /></OrderBtn>
        <OrderBtn><Tri d="d" c="#bbb" s={9} /></OrderBtn>
      </Order>
    </PaneTools>
    <AnimList>
      {ROWS.map((r, i) => (
        <AnimRow key={i}>
          <AnimNum>{r.n}</AnimNum>
          <AnimIcon>{r.mouse ? <Mouse /> : null}</AnimIcon>
          <AnimIcon $c={r.star}>
            {r.kind === 'h' && <Ic w={16} h={6}><path d="M1 3h14" stroke="#666" /><circle cx="1.5" cy="3" r="1.4" fill="#7aa" /><circle cx="14.5" cy="3" r="1.4" fill="#d77" /></Ic>}
            {r.kind === 'v' && <Ic w={6} h={17}><path d="M3 1v15" stroke="#666" /><circle cx="3" cy="1.6" r="1.4" fill="#7aa" /><circle cx="3" cy="15.4" r="1.4" fill="#d77" /></Ic>}
            {r.star && '★'}
          </AnimIcon>
          <AnimText>{r.t}</AnimText>
          <AnimBar $w={r.w} $at={r.at} $bg={BARS[r.bar][0]} $bd={BARS[r.bar][1]} />
        </AnimRow>
      ))}
    </AnimList>
    <Timeline>
      秒<Caret $c="#888" $ml={3}>▼</Caret>
      <Spacer $w={68} />
      <Tri d="l" c="#888" />
      <TimeBox>
        <TimeZero>0</TimeZero>
        <TimeMark $ml={27}>2</TimeMark>
        <TimeMark $ml={33}>4</TimeMark>
      </TimeBox>
      <Tri d="r" c="#888" />
    </Timeline>
    <Overscroll />
  </AnimPane>
);

const StatusBar = () => (
  <Status>
    <StatusText $ml={8}>幻灯片 第 6 张，共 8 张</StatusText>
    <StatusText $ml={18}><Ic w={15} h={15}><path d="M1 2h5l1 1v11l-1-1H1zM7 3l1-1h6v5M7 14l2-2" stroke="#666" /><path d="M10 9l2 2 3-4" stroke="#666" /></Ic></StatusText>
    <StatusText $ml={18}>中文(中国)</StatusText>
    <StatusText $ml={15} $gap={2}><Ic w={18} h={17}><path d="M8 2a6 6 0 00-3 11" stroke="#777" strokeDasharray="2 1" /><path d="M7 6l8 9M15 6l-8 9" stroke="#444" strokeWidth="2" /></Ic>辅助功能: 调查</StatusText>
    <StatusPush $gap={4}><Ic w={12} h={15}><path d="M1 8h10M1 11h10M3 14h6M6 2l3 3H3z" stroke="#666" /></Ic>备注</StatusPush>
    <StatusText $ml={20} $gap={2}><Ic w={15} h={15}><path d="M1 2h13v9H6l-3 3v-3H1z" fill="#666" /></Ic>批注</StatusText>
    <ViewBtn $bg="#bfbfbf" $ml={16}><Ic w={15} h={15}><rect x="1" y="1" width="13" height="13" stroke="#666" /><path d="M5 1v13" stroke="#666" /><rect x="7" y="3" width="5" height="4" stroke="#666" /></Ic></ViewBtn>
    <ViewBtn><Ic w={15} h={15}><rect x="1" y="1" width="5" height="5" stroke="#666" /><rect x="9" y="1" width="5" height="5" stroke="#666" /><rect x="1" y="9" width="5" height="5" stroke="#666" /><rect x="9" y="9" width="5" height="5" stroke="#666" /></Ic></ViewBtn>
    <ViewBtn><Ic w={15} h={15}><path d="M1 1l6 2 6-2v12l-6 2-6-2zM7 3v12M3 5h2M3 8h2M3 11h2M9 5h2M9 8h2M9 11h2" stroke="#666" /></Ic></ViewBtn>
    <ViewBtn $bg="#a3a3a3"><Ic w={15} h={15}><rect x="1" y="2" width="13" height="11" stroke="#666" /><path d="M1 4h13" stroke="#666" strokeWidth="2" /></Ic></ViewBtn>
    <StatusText $ml={6}>-</StatusText>
    <Zoom><ZoomKnob /></Zoom>
    <StatusText>+</StatusText>
    <StatusText $ml={11}>102%</StatusText>
    <StatusText $ml={14} $mr={5}><Ic w={13} h={15}><rect x=".5" y=".5" width="12" height="14" stroke="#888" /><path d="M6.5 3v2M6.5 10v2M3 7.5h2M8 7.5h2" stroke="#555" /></Ic></StatusText>
    <Pointer viewBox="0 0 14 20"><path d="M1 1v15l4-3 3 6 2-1-3-6h5z" fill="#111" stroke="#fff" /></Pointer>
  </Status>
);

export default function App() {
  return (
    <Page>
      <Global />
      <Header>
        <Decoration />
        <TitleBar>
          <Qat>
            <QatSlot $w={18}><Ic w={15} h={15}><path d="M1 1h10l3 3v10H1z" stroke="#f6e9e4" strokeWidth="1.6" /><rect x="4" y="1.5" width="6" height="4" fill="#f6e9e4" /><rect x="4" y="9" width="7" height="5" fill="#f6e9e4" /></Ic></QatSlot>
            <QatSlot $w={38}><Ic w={17} h={15}><path d="M5 1L1 5l4 4" stroke="#f6e9e4" strokeWidth="1.8" /><path d="M1 5h8a5 5 0 014 8" stroke="#f6e9e4" strokeWidth="1.8" /></Ic></QatSlot>
            <QatSlot $w={6}><Tri d="d" c="#eebfae" s={6} /></QatSlot>
            <QatSlot $w={28}><Ic w={15} h={15}><path d="M5 3a6 6 0 106 0" stroke="#f6e9e4" strokeWidth="1.8" /><path d="M10 0l1 4h4" stroke="#f6e9e4" strokeWidth="1.4" /></Ic></QatSlot>
            <QatSlot $w={32}><Ic w={17} h={17}><path d="M1 2h15M3 2v9h11V2M8 11l-2 5M9 11l2 5" stroke="#f6e9e4" /><circle cx="8.5" cy="7" r="3.3" stroke="#f6e9e4" /><path d="M7.5 5.5l2.5 1.5-2.5 1.5z" fill="#f6e9e4" /></Ic></QatSlot>
            <QatSlot $w={26}><Ic w={9} h={8}><path d="M1 1h7" stroke="#eebfae" /><path d="M1 4h7L4.5 7.5z" fill="#eebfae" /></Ic></QatSlot>
          </Qat>
          <DocTitle>PPT的动画的图层障眼法.pptx  -  PowerPoint</DocTitle>
          <WinControls>
            <UserName>Jin Jacob</UserName>
            <Avatar>JJ</Avatar>
            <WinBtn><Ic w={14} h={13}><rect x=".5" y="1.5" width="13" height="11" stroke="#f6e9e4" /><path d="M.5 3.5h13M7 11V6M5 8l2-2 2 2" stroke="#f6e9e4" /></Ic></WinBtn>
            <WinBtn><Ic w={10} h={2}><path d="M0 1h10" stroke="#f6e9e4" /></Ic></WinBtn>
            <WinBtn><Ic w={11} h={12}><rect x=".5" y="2.5" width="8" height="9" stroke="#f6e9e4" /><path d="M3 2.5V.5h7.5v9h-2" stroke="#f6e9e4" /></Ic></WinBtn>
            <WinBtn><Ic w={11} h={11}><path d="M.5.5l10 10M10.5.5l-10 10" stroke="#f6e9e4" /></Ic></WinBtn>
          </WinControls>
        </TitleBar>
        <TabRow>
          <Tab $mr={6.5}>文件</Tab>
          <Tab $active>开始</Tab>
          {['插入', '绘图', '设计', '切换', '动画', '幻灯片放映', '审阅', '视图', '录制', '开发工具', '帮助'].map(t => <Tab key={t}>{t}</Tab>)}
          <TellMe>
            <Ic w={13} h={18}><path d="M6.5 1a5 5 0 00-3 9c1 1 1 2 1 3h4c0-1 0-2 1-3a5 5 0 00-3-9zM5 15h3M5.5 17h2" stroke="#f6e9e4" /></Ic>
            操作说明搜索
          </TellMe>
          <Share><Ic w={16} h={17}><circle cx="7" cy="5" r="4" stroke="#f6e9e4" /><path d="M1 16c0-4 2-6 5-7M11 11v5M9 13.5h5" stroke="#f6e9e4" /></Ic>共享</Share>
        </TabRow>
      </Header>
      <RibbonBar />
      <Main>
        <SlideList />
        <Center>
          <CenterTop>
            <Work>
              <HRulerArt />
              <Canvas>
                <VRulerArt />
                <Sash />
                <SlideView />
              </Canvas>
            </Work>
            <VScroll>
              <ScrollBtn $h={17}><Tri d="u" c="#555" /></ScrollBtn>
              <VThumb $mt={510} />
              <ScrollBtn $h={14} $mt={241}><Tri d="d" c="#555" /></ScrollBtn>
              <ScrollBtn $flat $h={16} $mt={1}><Tri d="u" c="#666" /></ScrollBtn>
              <ScrollBtn $flat $h={16} $mt={1}><Tri d="d" c="#666" /></ScrollBtn>
            </VScroll>
          </CenterTop>
          <HScroll>
            <ScrollBtn><Tri d="l" c="#555" /></ScrollBtn>
            <HThumb />
            <HEnd><ScrollBtn><Tri d="r" c="#555" /></ScrollBtn></HEnd>
          </HScroll>
        </Center>
        <AnimationPane />
      </Main>
      <StatusBar />
    </Page>
  );
}
